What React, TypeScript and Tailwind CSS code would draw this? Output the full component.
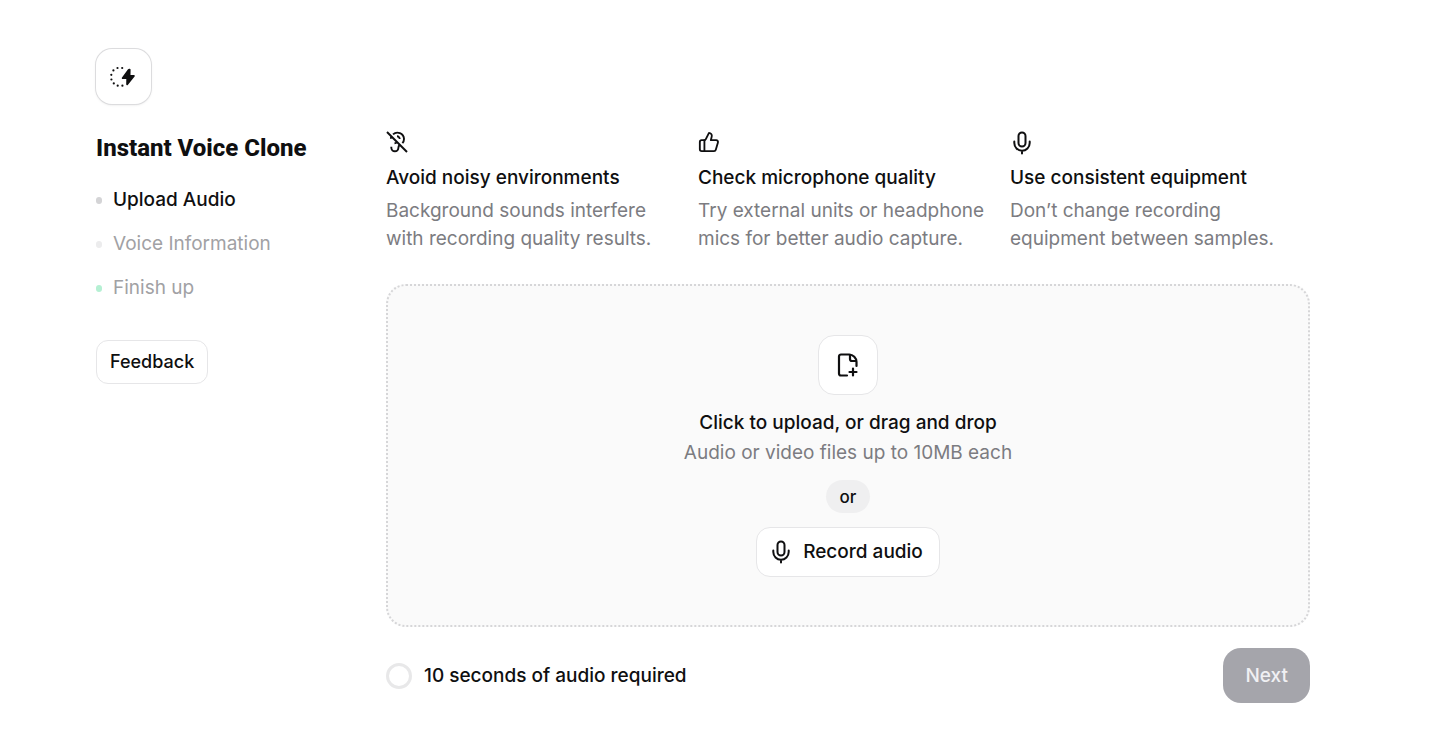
import React from 'react';
import { ThumbsUp } from 'lucide-react';

type IconProps = { className?: string };

const MicIcon: React.FC<IconProps> = ({ className }) => (
    <svg className={className} viewBox="0 0 24 24" fill="none" stroke="currentColor" strokeWidth="2" strokeLinecap="round" aria-hidden="true">
        <rect x="8.5" y="1.5" width="7" height="14" rx="3.5" />
        <path d="M4.3 10.5V12a7.7 7.7 0 0 0 15.4 0v-1.5M12 19.8V22.5" />
    </svg>
);

const EarOffIcon: React.FC<IconProps> = ({ className }) => (
    <svg className={className} viewBox="0 0 22 22" fill="none" stroke="currentColor" strokeWidth="1.9" aria-hidden="true">
        <path d="M1 1l20 20" />
        <path d="M7 3.4A6.6 6.6 0 0 1 18 7.900c0 1.800-.6 3.100-1.600 4.300" />
        <path d="M5.300 5.500c-.3.700-.4 1.500-.4 2.300" />
        <path d="M11 5.300A2.700 2.700 0 0 1 13.700 8M8.500 12.200c1.200 0 2-.6 2.400-1.400" />
        <path d="M5.300 15.800v.7c0 2.200 1.600 3.800 3.600 3.800s3.500-1.500 3.500-3.500c0-1.200.4-2 1.200-2.800" />
    </svg>
);

const FilePlusIcon: React.FC<IconProps> = ({ className }) => (
    <svg className={className} viewBox="0 0 24 24" fill="none" stroke="currentColor" strokeWidth="2.2" strokeLinecap="round" strokeLinejoin="round" aria-hidden="true">
        <path d="M11 22.500H5a2 2 0 0 1-2-2v-17a2 2 0 0 1 2-2h8A7.500 7.500 0 0 1 20.500 9v4" />
        <path d="M14 1.800V6a2 2 0 0 0 2 2h4" />
        <path d="M17 15.500v7M13.500 19h7" />
    </svg>
);

// Dotted half circle with a bolt
const InstantIcon: React.FC<IconProps> = ({ className }) => (
    <svg className={className} viewBox="0 0 28 28" fill="currentColor" aria-hidden="true">
        <circle cx="12.2" cy="5" r="1.1" />
        <circle cx="7.5" cy="5" r="1.1" />
        <circle cx="3.4" cy="7.4" r="1.1" />
        <circle cx="1.3" cy="11.800" r="1.1" />
        <circle cx="1.4" cy="16.500" r="1.1" />
        <circle cx="3.800" cy="20.400" r="1.1" />
        <circle cx="7.700" cy="22.700" r="1.1" />
        <circle cx="12.400" cy="22.700" r="1.1" />
        <path d="M18 6.200 12 14.600a.9.9 0 0 0 .7 1.500h3.600l-.1 5.200c0 .9 1 1.200 1.600.6l6.800-8.500a.9.900 0 0 0-.7-1.500h-3.400l.1-5.300c0-1-1.900-1.300-2.600-.4Z" />
    </svg>
);

const steps = [
    { label: 'Upload Audio', dot: 'bg-[#d4d4d6]', text: 'font-medium text-[#0f0f10]' },
    { label: 'Voice Information', dot: 'bg-[#ececed]', text: 'text-[#a1a1a4]' },
    { label: 'Finish up', dot: 'bg-[#b5f0d3]', text: 'text-[#a1a1a4]' },
];

const tips = [
    {
        title: 'Avoid noisy environments',
        body: ['Background sounds interfere', 'with recording quality results.'],
        icon: <EarOffIcon className="size-[22px]" />,
    },
    {
        title: 'Check microphone quality',
        body: ['Try external units or headphone', 'mics for better audio capture.'],
        icon: <ThumbsUp className="size-[22px]" strokeWidth={2} />,
    },
    {
        title: 'Use consistent equipment',
        body: ['Don’t change recording', 'equipment between samples.'],
        icon: <MicIcon className="size-6" />,
    },
];

const Sidebar: React.FC = () => (
    <aside className="w-[290px] shrink-0">
        <div className="size-[55px] flex items-center justify-center rounded-2xl bg-white ring-1 ring-[#dcdcde] shadow-sm">
            <InstantIcon className="size-7" />
        </div>
        <h1 className="mt-7 font-[Roboto,sans-serif] text-[24px] leading-8 font-extrabold">Instant Voice Clone</h1>
        <ol className="mt-[14px] flex flex-col">
            {steps.map(step => (
                <li key={step.label} className="h-11 flex items-center gap-[11px]">
                    <span className={`w-[6px] h-[7px] rounded-full ${step.dot}`} />
                    <a href="#" className={step.text}>{step.label}</a>
                </li>
            ))}
        </ol>
        <button type="button" className="mt-[30px] h-11 px-[13px] rounded-xl border border-[#e6e6e8] bg-white text-[18px] font-medium">Feedback</button>
    </aside>
);

export default function App() {
    return (
        <div className="min-h-screen bg-white flex pt-[49px] pb-9 pl-24 pr-32 font-[Inter,sans-serif] text-[19px] leading-7 text-[#0f0f10]">
            <Sidebar />

            <main className="flex-1 min-w-0 pt-[82px]">
                {/* Recording tips */}
                <div className="grid grid-cols-3 gap-3">
                    {tips.map(tip => (
                        <section key={tip.title}>
                            <div className="h-6">{tip.icon}</div>
                            <h2 className="mt-[9px] font-medium whitespace-nowrap">{tip.title}</h2>
                            <p className="mt-[5px] text-[#7c7c81] whitespace-nowrap">
                                {tip.body[0]}<br />{tip.body[1]}
                            </p>
                        </section>
                    ))}
                </div>

                {/* Drop zone */}
                <div className="mt-[31px] flex flex-col items-center rounded-[20px] border-2 border-dotted border-[#d6d6d8] bg-[#fafafa] pt-[49px] pb-12">
                    <button type="button" aria-label="Upload file" className="size-[60px] flex items-center justify-center rounded-2xl border border-[#e6e6e8] bg-white">
                        <FilePlusIcon className="size-6" />
                    </button>
                    <p className="mt-[14px] font-medium">Click to upload, or drag and drop</p>
                    <p className="mt-[2px] text-[#7c7c81]">Audio or video files up to 10MB each</p>
                    <span className="mt-[13px] h-[33px] px-[14px] flex items-center rounded-full bg-[#efeff0] text-[17px] font-medium">or</span>
                    <button type="button" className="mt-[14px] h-[50px] pl-3 pr-4 flex items-center gap-[10px] rounded-[14px] border border-[#e6e6e8] bg-white font-medium">
                        <MicIcon className="size-6" />
                        Record audio
                    </button>
                </div>

                {/* Footer */}
                <div className="mt-[21px] flex items-center justify-between">
                    <div className="flex items-center gap-3 font-medium">
                        <span className="size-[26px] rounded-full border-3 border-[#e8e8e9]" />
                        10 seconds of audio required
                    </div>
                    <button type="button" disabled className="h-[55px] px-[22px] rounded-[18px] bg-[#a5a5ab] text-[#f0f0f3] font-medium">Next</button>
                </div>
            </main>
        </div>
    );
}
